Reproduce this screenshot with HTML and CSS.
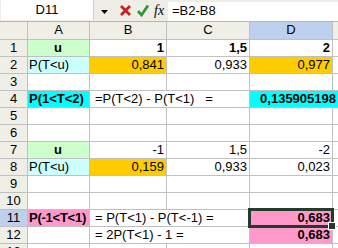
FILE: index.html
```html
<!DOCTYPE html>
<html lang="de">
<head>
  <meta charset="UTF-8" />
  <title>Mappe1 - Normalverteilung</title>
  <link rel="stylesheet" href="styles.css">
</head>
<body>

  <!-- Formula bar -->
  <div class="formula-bar">
    <div class="name-box">D11</div>
    <div class="name-arrow">
      <svg width="7" height="4" viewBox="0 0 7 4"><polygon points="0,0 7,0 3.5,4" fill="#000"/></svg>
    </div>
    <svg class="fx-btn" width="13" height="13" viewBox="0 0 13 13">
      <path d="M2 2 L11 11 M11 2 L2 11" stroke="#c8201f" stroke-width="2.8" fill="none"/>
    </svg>
    <svg class="fx-btn" width="12" height="13" viewBox="0 0 12 13">
      <path d="M1 7 L4.5 11 L11 1.5" stroke="#2f9a32" stroke-width="2.8" fill="none"/>
    </svg>
    <span class="fx-label">fx</span>
    <div class="formula-input">=B2-B8</div>
  </div>

  <!-- Sheet -->
  <div class="sheet">
    <div class="hdr"></div>
    <div class="hdr">A</div>
    <div class="hdr">B</div>
    <div class="hdr">C</div>
    <div class="hdr hdr-sel">D</div>
    <div class="hdr"></div>

    <div class="hdr">1</div>
    <div class="cell ctr bold green">u</div>
    <div class="cell num bold">1</div>
    <div class="cell num bold">1,5</div>
    <div class="cell num bold">2</div>
    <div class="cell"></div>

    <div class="hdr">2</div>
    <div class="cell light-cyan">P(T&lt;u)</div>
    <div class="cell num gold">0,841</div>
    <div class="cell num">0,933</div>
    <div class="cell num gold">0,977</div>
    <div class="cell"></div>

    <div class="hdr">3</div>
    <div class="cell"></div><div class="cell"></div><div class="cell"></div><div class="cell"></div><div class="cell"></div>

    <div class="hdr">4</div>
    <div class="cell bold cyan">P(1&lt;T&lt;2)</div>
    <div class="cell span2 pad-text">=P(T&lt;2) - P(T&lt;1) &nbsp; =</div>
    <div class="cell span2 num bold cyan num-wide">0,135905198</div>

    <div class="hdr">5</div>
    <div class="cell"></div><div class="cell"></div><div class="cell"></div><div class="cell"></div><div class="cell"></div>

    <div class="hdr">6</div>
    <div class="cell"></div><div class="cell"></div><div class="cell"></div><div class="cell"></div><div class="cell"></div>

    <div class="hdr">7</div>
    <div class="cell ctr bold green">u</div>
    <div class="cell num">-1</div>
    <div class="cell num">1,5</div>
    <div class="cell num">-2</div>
    <div class="cell"></div>

    <div class="hdr">8</div>
    <div class="cell light-cyan">P(T&lt;u)</div>
    <div class="cell num gold">0,159</div>
    <div class="cell num">0,933</div>
    <div class="cell num">0,023</div>
    <div class="cell"></div>

    <div class="hdr">9</div>
    <div class="cell"></div><div class="cell"></div><div class="cell"></div><div class="cell"></div><div class="cell"></div>

    <div class="hdr">10</div>
    <div class="cell"></div><div class="cell"></div><div class="cell"></div><div class="cell"></div><div class="cell"></div>

    <div class="hdr hdr-sel">11</div>
    <div class="cell bold pink tight">P(-1&lt;T&lt;1)</div>
    <div class="cell span2 pad-text">= P(T&lt;1) - P(T&lt;-1) =</div>
    <div class="cell num bold pink active">0,683</div>
    <div class="cell"></div>

    <div class="hdr">12</div>
    <div class="cell"></div>
    <div class="cell span2 pad-text">= 2P(T&lt;1) - 1 =</div>
    <div class="cell num bold pink">0,683</div>
    <div class="cell"></div>

    <div class="hdr">13</div>
    <div class="cell"></div><div class="cell"></div><div class="cell"></div><div class="cell"></div><div class="cell"></div>
  </div>

</body>
</html>
```

FILE: styles.css
```css
* {
  margin: 0;
  padding: 0;
  box-sizing: border-box;
}

body {
  width: 338px;
  height: 248px;
  overflow: hidden;
  background: #ffffff;
  font-family: 'Liberation Sans', Arial, sans-serif;
  font-size: 13px;
  color: #000;
}

/* formula bar */
.formula-bar {
  display: flex;
  align-items: center;
  height: 21px;
  background: #efeee6;
}

.name-box {
  width: 93px;
  height: 20px;
  margin-left: 1px;
  align-self: flex-start;
  background: #fff;
  border-right: 1px solid #cfcdc2;
  text-align: center;
  line-height: 20px;
}

.name-arrow {
  width: 20px;
  display: flex;
  justify-content: center;
  padding-top: 2px;
}

.fx-btn {
  margin-left: 5px;
}

.fx-label {
  margin-left: 5px;
  font-family: 'Liberation Serif', 'Times New Roman', serif;
  font-style: italic;
  font-size: 14px;
  width: 12px;
}

.formula-input {
  flex: 1;
  margin-left: 2px;
  height: 19px;
  align-self: flex-end;
  background: #fff;
  padding-left: 4px;
  line-height: 18px;
}

/* grid */
.sheet {
  display: grid;
  grid-template-columns: 27px 61px 76px 82px 82px 5px;
  grid-template-rows: 17px repeat(13, 16px);
  gap: 1px;
  background: #c0c0c0;
  border-top: 1px solid #b8b7ae;
}

.hdr {
  background: #efeee7;
  text-align: center;
  line-height: 16px;
}

.hdr-sel {
  background: #bdd0ee;
}

.cell {
  background: #fff;
  padding: 0 2px 0 1px;
  line-height: 16px;
  white-space: nowrap;
  overflow: hidden;
}

.span2 {
  grid-column: span 2;
}

.num {
  text-align: right;
}

.num-wide {
  padding-right: 2px;
}

.ctr {
  text-align: center;
}

.bold {
  font-weight: bold;
}

.tight {
  padding: 0 0 0 1px;
  letter-spacing: -0.25px;
}

.pad-text {
  padding-left: 5px;
  white-space: pre;
}

.green { background: #ccffcc; }
.light-cyan { background: #ccffff; }
.gold { background: #ffcc00; }
.cyan { background: #00ffff; }
.pink { background: #ff99cc; }

/* active cell */
.active {
  position: relative;
  z-index: 1;
  overflow: visible;
  outline: 3px solid #223b2b;
  outline-offset: -1px;
}

.active::after {
  content: '';
  position: absolute;
  right: -4px;
  bottom: -4px;
  width: 6px;
  height: 6px;
  background: #223b2b;
  border: 1px solid #fff;
}
```
